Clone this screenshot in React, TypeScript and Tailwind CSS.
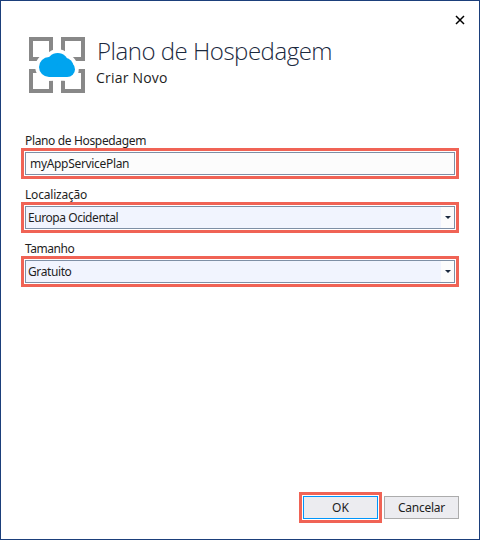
import React from "react";

function Cloud() {
  return (
    <>
      <circle cx="49" cy="67" r="10" />
      <circle cx="57.7" cy="64" r="11" />
      <circle cx="65" cy="66.5" r="8.5" />
      <circle cx="67.2" cy="69.2" r="7.8" />
      <rect x="49" y="66" width="18" height="11" />
    </>
  );
}

function Logo() {
  return (
    <svg width="56" height="56" viewBox="29 37 56 56" className="block shrink-0">
      <g fill="none" stroke="#888888" strokeWidth="4">
        <rect x="31" y="39" width="20" height="20" />
        <rect x="63" y="39" width="20" height="20" />
        <rect x="31" y="71" width="20" height="20" />
        <rect x="63" y="71" width="20" height="20" />
      </g>
      <g fill="#fff" stroke="#fff" strokeWidth="7.5">
        <Cloud />
      </g>
      <g fill="#00a4ef">
        <Cloud />
      </g>
    </svg>
  );
}

function Field({ label, labelClass, children }: { label: string; labelClass: string; children: React.ReactNode }) {
  return (
    <div className="h-[54px]">
      <div className="h-4 pl-1 text-[12px] leading-[18px]">
        <span className={labelClass}>{label}</span>
      </div>
      <div className="h-[31px] border-[3px] border-[#f06355] p-px">{children}</div>
    </div>
  );
}

function Select({ value, valueClass }: { value: string; valueClass: string }) {
  return (
    <div className="flex h-[23px] border border-[#7e8fa5] bg-[#f1f4fe]">
      <div className="flex-1 pl-[2px] text-[12px] leading-[21px]">
        <span className={valueClass}>{value}</span>
      </div>
      <div className="flex w-[13px] items-center justify-center bg-[#fcfcfc]">
        <svg width="6" height="3" viewBox="0 0 6 3">
          <path d="M0 0H6L3 3Z" fill="#1b293e" />
        </svg>
      </div>
    </div>
  );
}

export default function App() {
  return (
    <div className="flex h-[540px] w-[480px] flex-col border border-[#1b3f7b] bg-white font-['Noto_Sans','Open_Sans',sans-serif] text-[#1e1e1e]">
      <div className="flex h-9 justify-end pt-[14px] pr-[14px]">
        <svg width="10" height="10" viewBox="0 0 10 10">
          <path d="M1 1L9 9M9 1L1 9" stroke="#000" strokeWidth="1.5" fill="none" />
        </svg>
      </div>
      <header className="flex h-[95px] pl-7">
        <Logo />
        <div className="pl-[11px] font-['Open_Sans',sans-serif]">
          <h1 className="h-[30px] pl-px text-[24px] leading-[28px] font-light tracking-[-0.48px] whitespace-nowrap text-[#1b293e]">
            Plano de Hospedagem
          </h1>
          <p className="text-[14px] leading-[21px] tracking-[0.2px]">Criar Novo</p>
        </div>
      </header>
      <main className="flex-1 px-5">
        <Field label="Plano de Hospedagem" labelClass="tracking-[-0.35px]">
          <div className="h-[23px] border border-[#7e8fa5] bg-[#fcfcfc] pl-1 text-[12px] leading-[21px] tracking-[-0.32px]">
            myAppServicePlan
          </div>
        </Field>
        <Field label="Localização" labelClass="tracking-[-0.2px]">
          <Select value="Europa Ocidental" valueClass="tracking-[-0.44px]" />
        </Field>
        <Field label="Tamanho" labelClass="tracking-[-0.45px]">
          <Select value="Gratuito" valueClass="tracking-[-0.4px]" />
        </Field>
      </main>
      <footer className="flex h-[47px] items-start justify-end gap-[2px] pr-5 text-[12px]">
        <div className="h-[31px] w-[83px] border-[3px] border-[#f06355] p-px">
          <button className="block h-[23px] w-full border border-[#0095fb] bg-[#ececf0] leading-[21px]">OK</button>
        </div>
        <button className="mt-1 block h-[23px] w-[75px] border border-[#acacac] bg-[#ececf0] leading-[21px] tracking-[-0.25px]">
          Cancelar
        </button>
      </footer>
    </div>
  );
}
